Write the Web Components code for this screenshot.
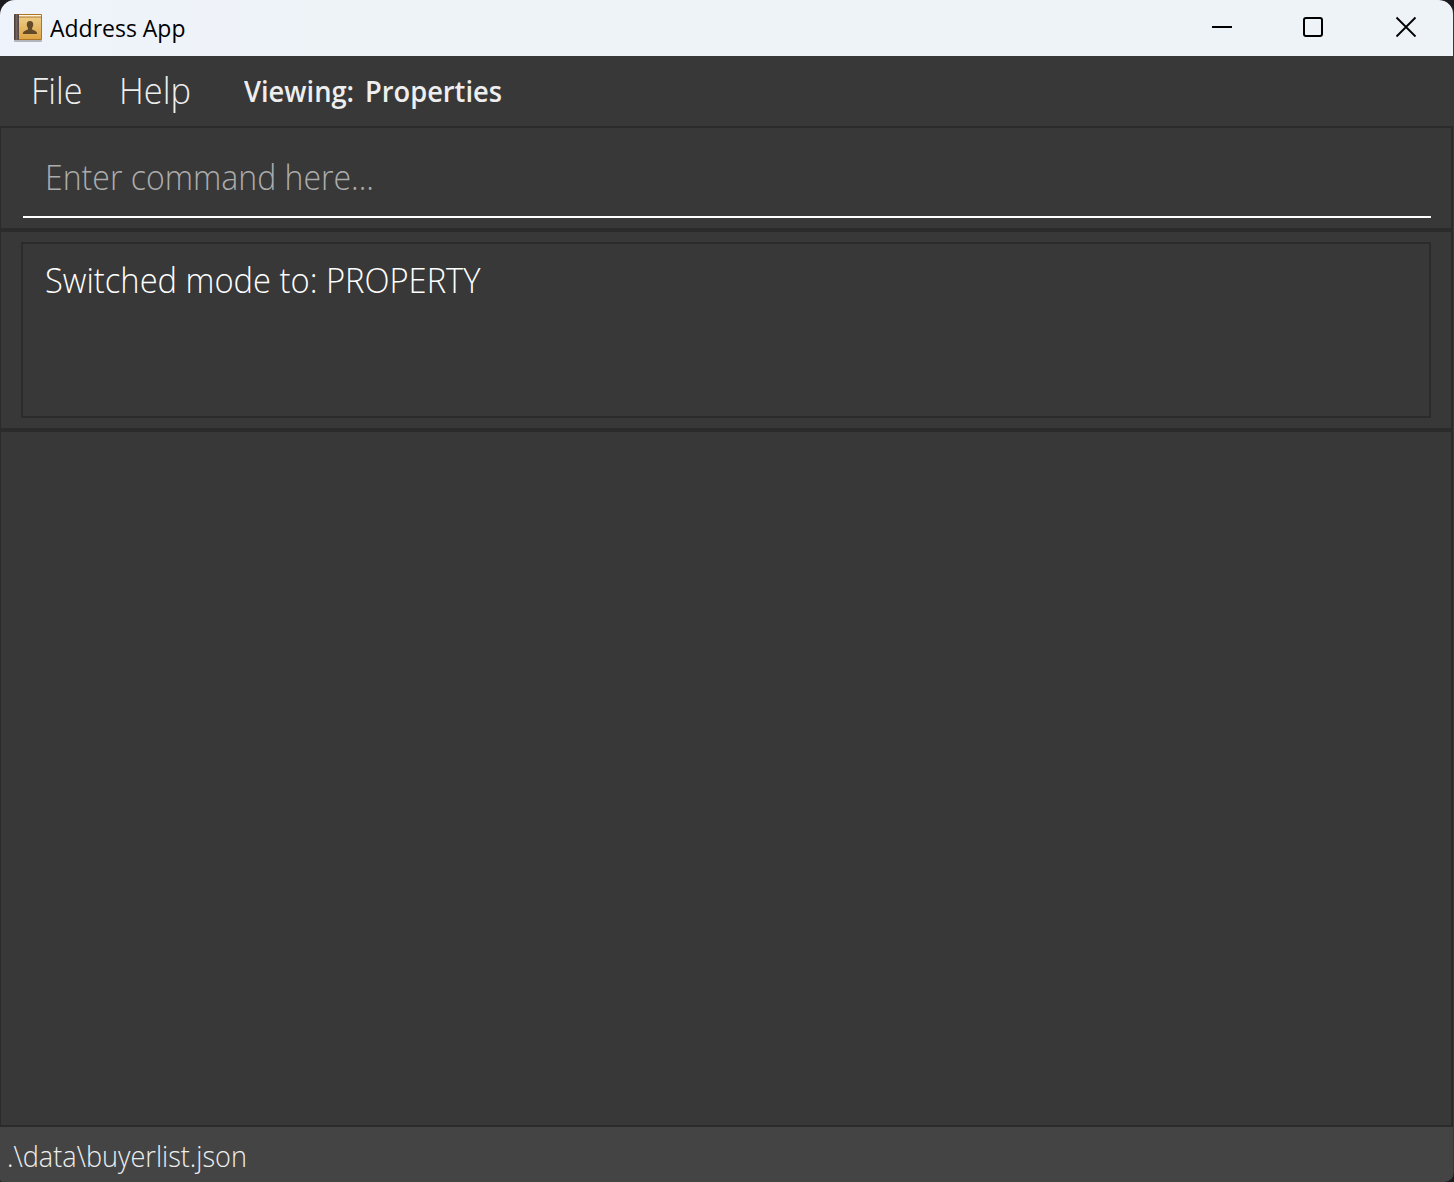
<!DOCTYPE html>
<html lang="en">
<head>
<meta charset="utf-8">
<title>Address App</title>
<style>
html, body { margin: 0; height: 100%; background: #1c1b1f; overflow: hidden; }
</style>
</head>
<body>
<app-window>
  <title-bar slot="title">Address App</title-bar>
  <menu-strip slot="menu">
    <fit-text slot="item" width="51.5">File</fit-text>
    <fit-text slot="item" width="72">Help</fit-text>
    <fit-text slot="mode" width="258">Viewing: Properties</fit-text>
  </menu-strip>
  <command-box><fit-text width="329">Enter command here...</fit-text></command-box>
  <result-display><fit-text width="435.5">Switched mode to: PROPERTY</fit-text></result-display>
  <list-pane></list-pane>
  <status-bar slot="status"><fit-text width="240">.\data\buyerlist.json</fit-text></status-bar>
</app-window>
<script>
const define = (name, html, ready) => customElements.define(name, class extends HTMLElement {
  constructor() {
    super();
    this.attachShadow({ mode: 'open' }).innerHTML = html;
  }
  connectedCallback() { if (ready) ready(this); }
});

// A single line of text condensed or widened to the advance given by its width attribute.
define('fit-text', `
<style>
:host { display: block; white-space: nowrap; line-height: 1; flex: none; }
span { display: inline-block; transform-origin: 0 50%; }
</style><span><slot></slot></span>`, el => {
  const width = Number(el.getAttribute('width'));
  el.style.width = width + 'px';
  const fit = () => {
    const span = el.shadowRoot.querySelector('span');
    if (span.offsetWidth) {
      span.style.transform = 'none';
      span.style.transform = 'scaleX(' + width / span.getBoundingClientRect().width + ')';
    }
  };
  requestAnimationFrame(fit);
  window.addEventListener('load', fit);
});

define('app-window', `
<style>
:host { display: flex; flex-direction: column; height: 100vh; border-radius: 15px 15px 10px 3px; overflow: hidden; background: #383838; font-family: "Open Sans", "Noto Sans", sans-serif; font-weight: 300; }
main { flex: 1; display: flex; flex-direction: column; margin-right: 1px; border: solid #2b2b2b; border-width: 2px 2px 2px 1px; box-sizing: border-box; min-height: 0; }
</style>
<slot name="title"></slot><slot name="menu"></slot><main><slot></slot></main><slot name="status"></slot>`);

define('title-bar', `
<style>
:host { display: flex; align-items: center; height: 56px; flex: none; margin-right: 1px; border-radius: 0 14px 0 0; background: linear-gradient(90deg, #eff3fb, #eef3f8 25%); color: #000; font-size: 23.5px; font-weight: 400; }
.icon { width: 30px; height: 30px; margin-left: 13px; flex: none; }
fit-text { margin-left: 7px; padding-top: 2px; }
.controls { display: flex; align-items: center; margin: 0 36px 2px auto; }
.controls svg { width: 22px; height: 22px; display: block; fill: none; stroke: #000; stroke-width: 2; }
.controls svg + svg { margin-left: 69px; }
.controls svg:last-child { margin-left: 71px; }
</style>
<svg class="icon" viewBox="0 0 30 30">
  <defs>
    <linearGradient id="cover" x1="0" y1="0" x2="0" y2="1"><stop offset="0" stop-color="#eccb85"/><stop offset="1" stop-color="#dda544"/></linearGradient>
    <linearGradient id="spine" x1="0" y1="0" x2="1" y2="0"><stop offset="0" stop-color="#423633"/><stop offset=".5" stop-color="#75635f"/><stop offset="1" stop-color="#4d403b"/></linearGradient>
  </defs>
  <rect x="1" y="26.500" width="28" height="2.500" rx="1" fill="#8b8c90" opacity=".6"/>
  <rect x="1" y="1" width="28" height="26" rx="1" fill="#ad7426"/>
  <rect x="5" y="2" width="23" height="1.500" fill="#fff5df"/>
  <rect x="6" y="4.500" width="22" height="21.500" fill="url(#cover)"/>
  <rect x="1" y="1" width="5" height="26" rx="1" fill="url(#spine)"/>
  <path d="M17 8c2.200 0 3.300 1.400 3.200 3.500c0 1.700-.5 2.600-1.100 3.300v1.700c.8.900 4.900.8 5.100 4.500H9.800c.2-3.700 4.300-3.600 5.100-4.500v-1.700c-.6-.7-1.100-1.600-1.100-3.300C13.700 9.400 14.800 8 17 8z" fill="#62492a"/>
</svg>
<fit-text width="135.500"><slot></slot></fit-text>
<div class="controls">
  <svg viewBox="0 0 22 22"><path d="M1 11H21"/></svg>
  <svg viewBox="0 0 22 22"><rect x="2" y="2" width="18" height="18" rx="2"/></svg>
  <svg viewBox="0 0 22 22"><path d="M1.500 1.500L20.500 20.500M20.500 1.500L1.500 20.500" stroke-width="1.800"/></svg>
</div>`);

define('menu-strip', `
<style>
:host { display: flex; align-items: center; height: 70px; flex: none; color: #eee; padding-left: 31px; box-sizing: border-box; }
nav { display: flex; gap: 36.500px; font-size: 36px; }
.mode { margin-left: 53px; font-size: 28.500px; font-weight: 600; padding-top: 1px; word-spacing: 4px; }
</style>
<nav><slot name="item"></slot></nav><div class="mode"><slot name="mode"></slot></div>`);

define('command-box', `
<style>
:host { display: block; height: 100px; flex: none; box-sizing: border-box; padding: 10px 20px 10px 22px; }
.field { display: flex; align-items: center; height: 80px; box-sizing: border-box; border-bottom: 2px solid #fff; padding: 0 0 1px 22px; color: #acacac; font-size: 35px; }
</style><div class="field"><slot></slot></div>`);

define('result-display', `
<style>
:host { display: block; height: 204px; flex: none; box-sizing: border-box; padding: 10px 20px; border: solid #2b2b2b; border-width: 4px 0; }
.area { height: 176px; box-sizing: border-box; border: 2px solid #2b2b2b; padding: 18px 22px; color: #fff; font-size: 35px; }
</style><div class="area"><slot></slot></div>`);

define('list-pane', `<style>:host { display: block; flex: 1; background: #383838; }</style>`);

define('status-bar', `
<style>
:host { display: flex; align-items: center; height: 55px; flex: none; box-sizing: border-box; padding: 3px 0 0 7px; margin-right: 1px; background: #444; color: #eee; font-size: 29.500px; }
</style><slot></slot>`);
</script>
</body>
</html>
